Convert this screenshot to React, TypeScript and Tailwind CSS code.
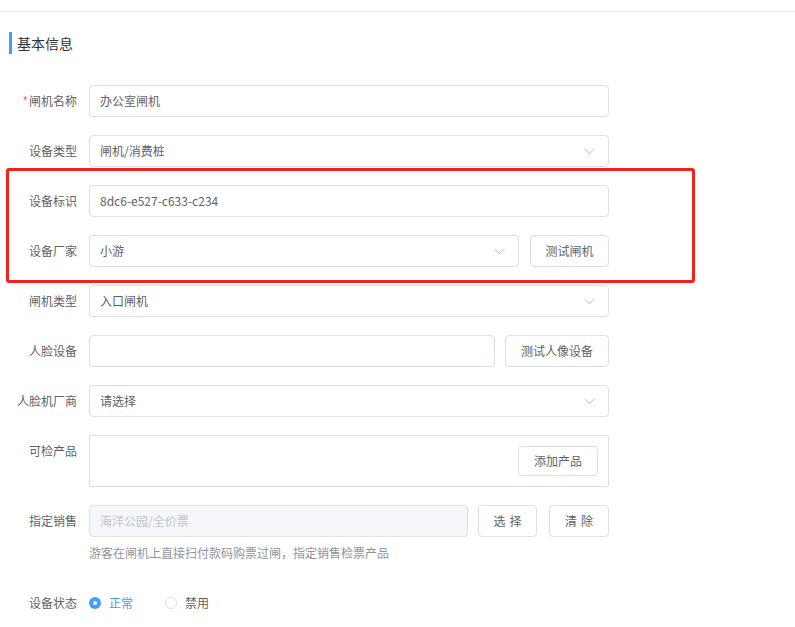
import React from "react";

const Chevron = () => (
  <svg width="11" height="7" viewBox="0 0 11 7" fill="none" className="shrink-0">
    <path d="M0.5 0.8 L5.5 5.8 L10.5 0.8" stroke="#b4b8bf" strokeWidth="1" />
  </svg>
);

const Label = ({ children, required }: { children: React.ReactNode; required?: boolean }) => (
  <div className="w-[77px] shrink-0 text-right text-[12px] text-[#606266] leading-8">
    {required && <span className="text-[#f56c6c] mr-[1px]">*</span>}
    {children}
  </div>
);

const Input = ({ value, w, chevron, disabled }: { value?: string; w: string; chevron?: boolean; disabled?: boolean }) => (
  <div
    className={`${w} h-8 border border-[#dcdfe6] rounded-[4px] flex items-center justify-between pl-[10px] pr-[13px] text-[12px] ${
      disabled ? "bg-[#f5f7fa] text-[#c0c4cc]" : "bg-white text-[#606266]"
    }`}
  >
    <span>{value}</span>
    {chevron && <Chevron />}
  </div>
);

const Btn = ({ children, w, h = "h-8" }: { children: React.ReactNode; w: string; h?: string }) => (
  <div
    className={`${w} ${h} shrink-0 border border-[#dcdfe6] rounded-[4px] bg-white flex items-center justify-center text-[12px] text-[#606266]`}
  >
    {children}
  </div>
);

export default function App() {
  return (
    <div
      className="relative w-[795px] h-[627px] bg-white overflow-hidden"
      style={{ fontFamily: '"Noto Sans CJK SC", "Noto Sans", sans-serif' }}
    >
      <div className="h-[12px] border-b border-[#e8e8e8]" />

      <div className="mt-[20px] pl-[9px] flex items-center h-[22px]">
        <div className="w-[3px] h-[22px] bg-[#409eff]" />
        <span className="ml-[5px] text-[14px] text-[#303133]">基本信息</span>
      </div>

      <div className="mt-[31px] flex flex-col">
        <div className="flex items-center mb-[18px]">
          <Label required>闸机名称</Label>
          <div className="ml-3">
            <Input w="w-[520px]" value="办公室闸机" />
          </div>
        </div>

        <div className="flex items-center mb-[18px]">
          <Label>设备类型</Label>
          <div className="ml-3">
            <Input w="w-[520px]" value="闸机/消费桩" chevron />
          </div>
        </div>

        <div className="flex items-center mb-[18px]">
          <Label>设备标识</Label>
          <div className="ml-3">
            <Input w="w-[520px]" value="8dc6-e527-c633-c234" />
          </div>
        </div>

        <div className="flex items-center mb-[18px]">
          <Label>设备厂家</Label>
          <div className="ml-3 flex items-center gap-[11px]">
            <Input w="w-[430px]" value="小游" chevron />
            <Btn w="w-[79px]">测试闸机</Btn>
          </div>
        </div>

        <div className="flex items-center mb-[18px]">
          <Label>闸机类型</Label>
          <div className="ml-3">
            <Input w="w-[520px]" value="入口闸机" chevron />
          </div>
        </div>

        <div className="flex items-center mb-[18px]">
          <Label>人脸设备</Label>
          <div className="ml-3 flex items-center gap-[10px]">
            <Input w="w-[406px]" value="" />
            <Btn w="w-[104px]">测试人像设备</Btn>
          </div>
        </div>

        <div className="flex items-center mb-[18px]">
          <Label>人脸机厂商</Label>
          <div className="ml-3">
            <Input w="w-[520px]" value="请选择" chevron />
          </div>
        </div>

        <div className="flex items-start mb-[18px]">
          <Label>可检产品</Label>
          <div className="ml-3 w-[520px] h-[52px] border border-[#dcdfe6] rounded-[2px] flex justify-end items-start pt-[10px] pr-[10px]">
            <Btn w="w-[80px]" h="h-[30px]">添加产品</Btn>
          </div>
        </div>

        <div className="flex items-center">
          <Label>指定销售</Label>
          <div className="ml-3 flex items-center">
            <Input w="w-[379px]" value="海洋公园/全价票" disabled />
            <div className="ml-[10px]">
              <Btn w="w-[59px]">
                <span className="tracking-[4px] -mr-[4px]">选择</span>
              </Btn>
            </div>
            <div className="ml-[12px]">
              <Btn w="w-[60px]">
                <span className="tracking-[4px] -mr-[4px]">清除</span>
              </Btn>
            </div>
          </div>
        </div>
        <div className="ml-[89px] mt-1 leading-6 text-[12px] text-[#909399]">
          游客在闸机上直接扫付款码购票过闸，指定销售检票产品
        </div>

        <div className="flex items-center mt-[22px]">
          <Label>设备状态</Label>
          <div className="ml-3 flex items-center h-8 text-[12px]">
            <div className="flex items-center mr-[32px]">
              <div className="w-[12px] h-[12px] rounded-full bg-[#409eff] flex items-center justify-center">
                <div className="w-[4px] h-[4px] rounded-full bg-white" />
              </div>
              <span className="ml-[8px] text-[#409eff]">正常</span>
            </div>
            <div className="flex items-center">
              <div className="w-[12px] h-[12px] rounded-full border border-[#dcdfe6] bg-white" />
              <span className="ml-[8px] text-[#606266]">禁用</span>
            </div>
          </div>
        </div>
      </div>

      <div className="absolute left-[6px] top-[168px] w-[689px] h-[115px] border-[3px] border-[#f5221b] rounded-[3px] pointer-events-none" />
    </div>
  );
}
